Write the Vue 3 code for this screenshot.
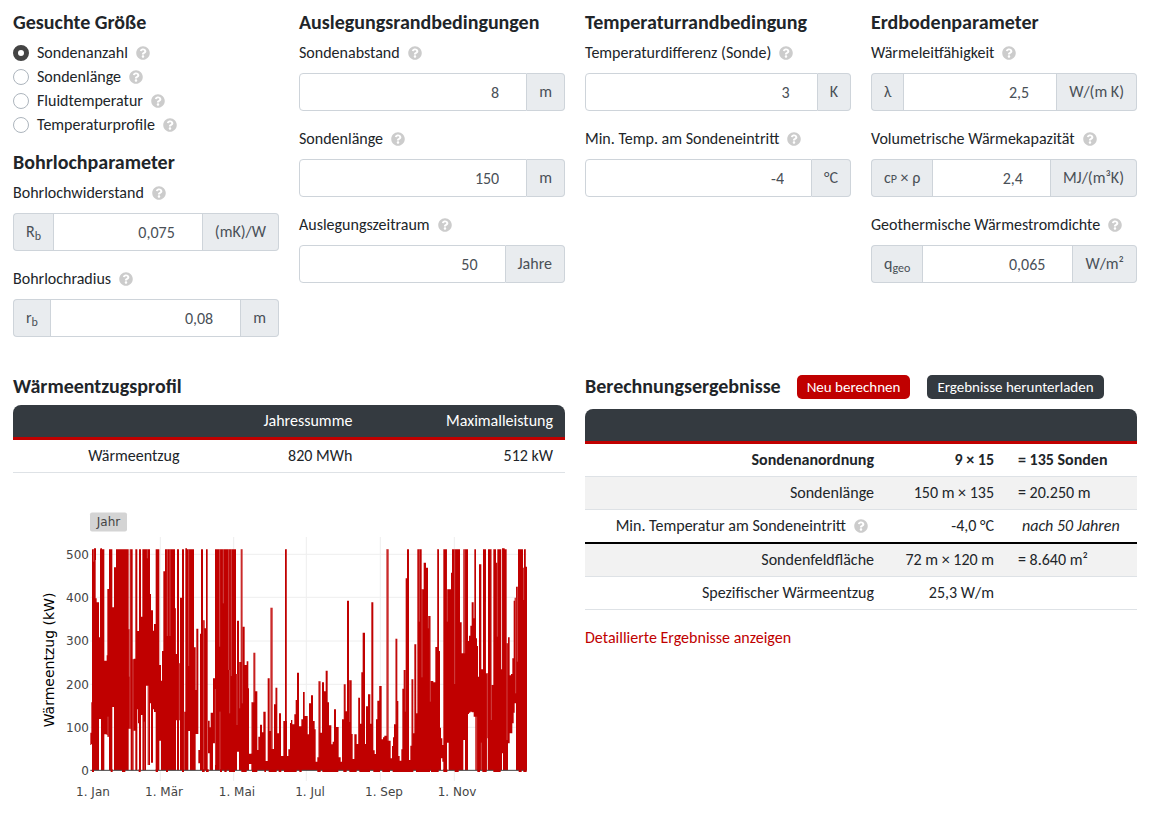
<template>
  <main class="page">
    <div class="params">
      <section>
        <h2>Gesuchte Größe</h2>
        <div v-for="m in modes" :key="m" class="radio">
          <label>
            <input v-model="mode" type="radio" name="mode" :value="m" />
            <span>{{ m }}</span>
          </label>
          <svg class="help" viewBox="0 0 512 512"><path :d="helpPath" /></svg>
        </div>
        <h2 class="sub">Bohrlochparameter</h2>
        <div v-for="f in borehole" :key="f.id" class="field">
          <label :for="f.id">{{ f.label }}</label>
          <svg class="help" viewBox="0 0 512 512"><path :d="helpPath" /></svg>
          <div class="group">
            <span v-if="f.symbol" class="addon left"><span v-html="f.symbol"></span></span>
            <input :id="f.id" v-model="f.value" type="text" inputmode="decimal" />
            <span class="addon right">{{ f.unit }}</span>
          </div>
        </div>
      </section>

      <section v-for="s in sections" :key="s.title">
        <h2>{{ s.title }}</h2>
        <div v-for="f in s.fields" :key="f.id" class="field">
          <label :for="f.id">{{ f.label }}</label>
          <svg class="help" viewBox="0 0 512 512"><path :d="helpPath" /></svg>
          <div class="group">
            <span v-if="f.symbol" class="addon left"><span v-html="f.symbol"></span></span>
            <input :id="f.id" v-model="f.value" type="text" inputmode="decimal" />
            <span class="addon right">{{ f.unit }}</span>
          </div>
        </div>
      </section>
    </div>

    <div class="output">
      <section>
        <h2>Wärmeentzugsprofil</h2>
        <table class="profile">
          <thead>
            <tr><th></th><th>Jahressumme</th><th>Maximalleistung</th></tr>
          </thead>
          <tbody>
            <tr><td>Wärmeentzug</td><td>820 MWh</td><td>512 kW</td></tr>
          </tbody>
        </table>

        <svg class="chart" viewBox="0 0 552 310">
          <rect x="77" y="12.5" width="37" height="19" rx="2" fill="#d4d4d4" />
          <text x="95.5" y="26" class="tick" text-anchor="middle">Jahr</text>

          <!-- plot area, three units per pixel -->
          <g transform="translate(67 40) scale(0.33333)">
            <path class="grid" :d="gridPath" />
            <path class="series" :d="seriesPath" />
            <path class="gaps" :d="gapPath" />
            <path class="zero" d="M31 691H1340" />
            <path class="series" :d="basePath" />
          </g>

          <text v-for="t in yTicks" :key="t.v" x="76" :y="t.y" class="tick" text-anchor="end">{{ t.v }}</text>
          <text v-for="t in xTicks" :key="t.v" :x="t.x" y="296" class="tick" text-anchor="middle">{{ t.v }}</text>
          <text class="axis" transform="translate(41 160) rotate(-90)" text-anchor="middle">Wärmeentzug (kW)</text>
        </svg>
      </section>

      <section>
        <div class="head">
          <h2>Berechnungsergebnisse</h2>
          <button type="button" class="btn red">Neu berechnen</button>
          <button type="button" class="btn dark">Ergebnisse herunterladen</button>
        </div>
        <table class="results">
          <thead>
            <tr><th></th><th></th><th></th></tr>
          </thead>
          <tbody>
            <tr class="strong"><td>Sondenanordnung</td><td>9 × 15</td><td>= 135 Sonden</td></tr>
            <tr><td>Sondenlänge</td><td>150 m × 135</td><td>= 20.250 m</td></tr>
            <tr class="split">
              <td>Min. Temperatur am Sondeneintritt<svg class="help" viewBox="0 0 512 512"><path :d="helpPath" /></svg></td>
              <td>-4,0 °C</td>
              <td><em>nach 50 Jahren</em></td>
            </tr>
            <tr><td>Sondenfeldfläche</td><td>72 m × 120 m</td><td>= 8.640 m²</td></tr>
            <tr><td>Spezifischer Wärmeentzug</td><td>25,3 W/m</td><td></td></tr>
          </tbody>
        </table>
        <a href="#" class="details" @click.prevent>Detaillierte Ergebnisse anzeigen</a>
      </section>
    </div>
  </main>
</template>

<script setup>
import { ref, reactive } from 'vue'

const helpPath = 'M504 256c0 136.997-111.043 248-248 248S8 392.997 8 256C8 119.083 119.043 8 256 8s248 111.083 248 248zM262.655 90c-54.497 0-89.255 22.957-116.549 63.758-3.536 5.286-2.353 12.415 2.715 16.258l34.699 26.31c5.205 3.947 12.621 3.008 16.665-2.122 17.864-22.658 30.113-35.797 57.303-35.797 20.429 0 45.698 13.148 45.698 32.958 0 14.976-12.363 22.667-32.534 33.976C247.128 238.528 216 254.941 216 296v4c0 6.627 5.373 12 12 12h56c6.627 0 12-5.373 12-12v-1.333c0-28.462 83.186-29.647 83.186-106.667 0-58.002-60.165-102-116.531-102zM256 338c-25.365 0-46 20.635-46 46 0 25.364 20.635 46 46 46s46-20.636 46-46c0-25.365-20.635-46-46-46z'

const modes = ['Sondenanzahl', 'Sondenlänge', 'Fluidtemperatur', 'Temperaturprofile']
const mode = ref('Sondenanzahl')

const borehole = reactive([
  { id: 'rb', label: 'Bohrlochwiderstand', symbol: 'R<sub>b</sub>', value: '0,075', unit: '(mK)/W' },
  { id: 'radius', label: 'Bohrlochradius', symbol: 'r<sub>b</sub>', value: '0,08', unit: 'm' }
])

const sections = reactive([
  {
    title: 'Auslegungsrandbedingungen',
    fields: [
      { id: 'abstand', label: 'Sondenabstand', value: '8', unit: 'm' },
      { id: 'laenge', label: 'Sondenlänge', value: '150', unit: 'm' },
      { id: 'zeitraum', label: 'Auslegungszeitraum', value: '50', unit: 'Jahre' }
    ]
  },
  {
    title: 'Temperaturrandbedingung',
    fields: [
      { id: 'dt', label: 'Temperaturdifferenz (Sonde)', value: '3', unit: 'K' },
      { id: 'tmin', label: 'Min. Temp. am Sondeneintritt', value: '-4', unit: '°C' }
    ]
  },
  {
    title: 'Erdbodenparameter',
    fields: [
      { id: 'lambda', label: 'Wärmeleitfähigkeit', symbol: 'λ', value: '2,5', unit: 'W/(m K)' },
      { id: 'cp', label: 'Volumetrische Wärmekapazität', symbol: 'c<small>P</small> × ρ', value: '2,4', unit: 'MJ/(m³K)' },
      { id: 'qgeo', label: 'Geothermische Wärmestromdichte', symbol: 'q<sub>geo</sub>', value: '0,065', unit: 'W/m²' }
    ]
  }
])

const yTicks = [500, 400, 300, 200, 100, 0].map((v, i) => ({ v, y: Math.round(59 + i * 43.2) }))
const xTicks = [
  { v: '1. Jan', x: 80 },
  { v: '1. Mär', x: 151 },
  { v: '1. Mai', x: 224 },
  { v: '1. Jul', x: 297 },
  { v: '1. Sep', x: 371 },
  { v: '1. Nov', x: 444 }
]

const gridPath = [241, 461, 679, 901, 1123].map(x => `M${x} -9V723`).join('') +
  [43, 172, 303, 433, 562].map(y => `M31 ${y}H1340`).join('')

// left, right, top, bottom (bottom defaults to the zero line)
const ZERO = 691
const bars = [
  [31, 34, 578, 615], [34, 37, 487, 612], [36, 47, 28], [42, 48, 25, 60], [47, 50, 175], [50, 57, 187], [57, 60, 292, 537], [60, 63, 28, 537],
  [61, 66, 25, 60], [63, 73, 28], [73, 80, 362, 583], [80, 82, 346, 585], [82, 87, 147, 590], [87, 97, 28], [97, 102, 202, 501],
  [102, 108, 82], [108, 146, 28], [146, 149, 268, 566], [149, 152, 28, 566], [152, 158, 28], [158, 161, 358], [161, 166, 356, 572],
  [166, 172, 28], [172, 174, 273, 508], [174, 177, 273, 550], [177, 183, 28], [183, 187, 230, 525], [187, 198, 28], [198, 203, 28, 437],
  [203, 210, 28, 675], [210, 213, 162, 490], [213, 219, 211, 668], [219, 222, 272, 508], [222, 227, 252, 516], [227, 238, 28],
  [238, 243, 375, 602], [243, 246, 422], [246, 250, 333], [250, 255, 94], [255, 285, 28], [285, 288, 205], [288, 291, 342, 541],
  [291, 297, 28], [297, 300, 370, 541], [300, 306, 173], [306, 312, 28], [312, 316, 515], [316, 325, 28], [316, 321, 25, 60],
  [325, 330, 28, 573], [330, 342, 28], [342, 347, 322], [347, 350, 450, 582], [349, 355, 266, 582], [355, 360, 630, 670],
  [360, 365, 281], [363, 369, 28], [369, 374, 241], [374, 378, 265], [378, 383, 28], [384, 389, 542, 640], [389, 392, 562],
  [392, 399, 518], [399, 405, 415, 610], [405, 468, 28], [468, 471, 402], [471, 477, 242, 635], [477, 482, 366], [482, 488, 28],
  [488, 494, 260], [494, 500, 375], [500, 505, 364], [505, 507, 445], [507, 514, 641, 672], [514, 520, 487], [520, 526, 338],
  [526, 532, 454], [532, 535, 630], [535, 540, 590], [540, 546, 554], [546, 550, 577], [550, 557, 515], [557, 563, 663],
  [563, 569, 415], [569, 571, 573], [571, 578, 203], [578, 582, 627], [582, 586, 493], [586, 592, 443], [592, 597, 580],
  [597, 603, 520], [603, 610, 648], [610, 615, 543], [615, 621, 28], [621, 625, 648], [625, 630, 628], [630, 633, 549],
  [633, 637, 540], [637, 643, 553], [643, 647, 523], [647, 651, 480], [651, 657, 398], [657, 664, 559], [664, 669, 538],
  [669, 674, 456], [674, 683, 528], [683, 687, 583], [687, 693, 490], [693, 699, 466], [699, 704, 543], [704, 707, 568],
  [707, 712, 665], [712, 715, 652], [715, 722, 424], [722, 726, 578], [726, 732, 427], [732, 737, 454], [737, 743, 392],
  [743, 747, 487], [747, 754, 556], [754, 758, 613], [758, 762, 605], [762, 768, 508], [768, 776, 561], [776, 782, 652],
  [782, 786, 665], [786, 791, 538], [791, 797, 433], [797, 801, 514], [801, 807, 182], [807, 815, 421], [815, 818, 582],
  [818, 823, 657], [823, 830, 583], [830, 834, 612], [834, 840, 473], [840, 844, 551], [844, 848, 397], [848, 855, 278],
  [855, 858, 612], [858, 864, 499], [864, 871, 463], [871, 874, 551], [874, 880, 187], [880, 884, 631], [884, 888, 642],
  [888, 892, 538], [892, 897, 482], [897, 905, 438], [905, 909, 598], [909, 913, 592], [913, 919, 587], [919, 926, 28],
  [926, 932, 602], [932, 936, 655], [936, 939, 618], [939, 942, 592], [942, 946, 553], [946, 952, 296], [952, 955, 483],
  [955, 959, 648], [959, 964, 662], [964, 967, 628], [967, 971, 446], [971, 977, 390], [977, 981, 115], [981, 987, 28],
  [987, 991, 660], [991, 994, 617], [994, 1000, 418], [1000, 1003, 580], [1003, 1009, 313], [1009, 1012, 520], [1012, 1025, 28], [1025, 1031, 148],
  [1031, 1038, 68], [1038, 1044, 83], [1044, 1052, 228], [1052, 1060, 423], [1060, 1066, 427], [1066, 1071, 321], [1071, 1077, 28],
  [1077, 1080, 333], [1080, 1083, 563], [1083, 1087, 595, 655], [1087, 1090, 615, 665], [1090, 1101, 28], [1101, 1106, 148, 608],
  [1106, 1113, 148], [1113, 1116, 98], [1116, 1140, 28], [1140, 1145, 247], [1145, 1150, 340], [1150, 1155, 28, 600],
  [1155, 1164, 28], [1164, 1167, 303, 522], [1167, 1171, 287, 518], [1171, 1175, 257, 515], [1175, 1181, 187, 517],
  [1181, 1183, 235, 530], [1183, 1188, 28, 530], [1186, 1191, 295], [1191, 1194, 318], [1194, 1198, 410], [1197, 1204, 73],
  [1204, 1209, 388], [1209, 1218, 28], [1218, 1222, 400], [1222, 1226, 400, 595], [1224, 1235, 28], [1235, 1240, 435],
  [1240, 1248, 28], [1248, 1252, 68], [1252, 1264, 28], [1264, 1266, 388], [1266, 1269, 28, 640], [1269, 1280, 28],
  [1266, 1274, 25, 60], [1280, 1284, 310], [1284, 1289, 292, 610], [1289, 1293, 406, 580], [1293, 1297, 402, 580],
  [1297, 1301, 355, 550], [1301, 1304, 182, 518], [1304, 1308, 173, 490], [1308, 1314, 140], [1314, 1329, 28],
  [1329, 1332, 83], [1332, 1338, 28], [1338, 1341, 80]
]
const seriesPath = bars.map(([l, r, t, b = ZERO]) => `M${l} ${t}H${r}V${b}H${l}Z`).join('')

// thin light slits between neighbouring peaks: x, top, bottom
const gaps = [
  [41, 28, 65], [84, 530, 588], [148, 268, 410], [150, 28, 566], [159, 358, 690], [186, 525, 690], [193, 545, 690], [202, 28, 55],
  [205, 437, 675], [262, 28, 288], [270, 28, 288], [288, 205, 342], [298, 370, 541], [313, 515, 690], [326, 28, 378],
  [371, 241, 690], [406, 447, 675], [419, 28, 320], [420, 515, 690], [430, 28, 190], [446, 28, 390], [449, 390, 520], [454, 28, 408],
  [471, 402, 555], [479, 366, 505], [483, 28, 366], [487, 28, 490], [515, 487, 640], [522, 338, 487],
  [572, 203, 573], [576, 203, 627], [587, 443, 493], [620, 28, 543], [716, 424, 652], [721, 424, 578], [791, 433, 538], [809, 421, 546],
  [835, 473, 612], [898, 438, 482], [920, 28, 587], [924, 28, 602], [947, 296, 553], [976, 390, 515], [995, 418, 617],
  [1010, 313, 520], [1018, 28, 245], [1026, 148, 412], [1045, 228, 265], [1051, 228, 485], [1072, 28, 321], [1102, 28, 245], [1124, 28, 432],
  [1154, 28, 340], [1190, 530, 690], [1204, 608, 690], [1219, 185, 400], [1222, 400, 690], [1234, 28, 540], [1252, 68, 290],
  [1265, 28, 388], [1281, 310, 600], [1307, 173, 460], [1312, 140, 365], [1331, 83, 180], [1337, 28, 80]
]
const gapPath = gaps.map(([x, t, b]) => `M${x} ${t}V${b}`).join('')

// low points that reach just under the axis
const basePath = [
  [36, 42], [92, 98], [126, 136], [176, 182], [227, 234], [258, 264], [306, 312], [366, 374], [378, 386], [420, 426], [433, 440],
  [447, 465], [484, 500], [516, 532], [553, 558], [566, 590], [596, 604], [612, 650], [658, 665], [712, 722], [727, 775],
  [790, 800], [808, 830], [838, 870], [880, 900], [907, 930], [938, 1000], [1008, 1050], [1053, 1076], [1090, 1102],
  [1124, 1136], [1192, 1200], [1207, 1220], [1240, 1262], [1316, 1325], [1330, 1340]
].map(([l, r]) => `M${l} 688H${r}V696H${l}Z`).join('')
</script>

<style>
body { margin: 0; background: #fff; }
</style>

<style scoped>
.page {
  padding: 10px 19px 8px 13px;
  color: #212529;
  font-family: Calibri, Carlito, "Open Sans", sans-serif;
  font-size: 16px;
  line-height: 24px;
}
.params {
  display: grid;
  grid-template-columns: repeat(4, minmax(0, 1fr));
  gap: 20px;
}
.output {
  display: grid;
  grid-template-columns: repeat(2, minmax(0, 1fr));
  gap: 20px;
  margin-top: 21px;
}
h2 { margin: 0 0 7px; font-size: 20px; line-height: 24px; font-weight: 700; }
h2.sub { margin-top: 13px; }

.help { width: 14px; height: 14px; margin-left: 8px; vertical-align: -2px; fill: #ccc; }

.radio { display: flex; align-items: center; height: 24px; }
.radio label { display: flex; align-items: center; gap: 8px; }
.radio input {
  appearance: none;
  width: 16px; height: 16px;
  margin: 0;
  border: 1px solid #adb5bd; border-radius: 50%;
  background: #fff;
}
.radio input:checked { border: 5px solid #444; }

.field { margin-bottom: 16px; }
.group { display: flex; height: 38px; margin-top: 8px; }
.group input {
  flex: 1; min-width: 0;
  box-sizing: border-box;
  padding: 2px 27px 0 12px;
  border: 1px solid #ced4da; border-radius: 4px 0 0 4px;
  background: #fff; color: #495057;
  font: inherit; text-align: right;
}
.addon + input { border-radius: 0; }
.addon {
  display: flex; align-items: center;
  box-sizing: border-box;
  padding: 0 12px;
  border: 1px solid #ced4da;
  background: #e9ecef; color: #495057;
  white-space: nowrap;
}
.addon.left { border-right: 0; border-radius: 4px 0 0 4px; }
.addon.right { border-left: 0; border-radius: 0 4px 4px 0; }
.addon :deep(sub) { position: relative; bottom: -3px; font-size: 12px; line-height: 0; vertical-align: baseline; }
.addon :deep(small) { font-size: 12px; }

table { width: 100%; border-collapse: separate; border-spacing: 0; table-layout: fixed; }
th {
  height: 32px;
  padding: 0 12px;
  border-bottom: 3px solid #c00000;
  background: #343a40; color: #fff;
  font-weight: 400; text-align: right;
}
th:first-child { border-top-left-radius: 8px; }
th:last-child { border-top-right-radius: 8px; }
td { height: 32px; padding: 0 12px; border-bottom: 1px solid #dee2e6; text-align: right; }
.profile th:nth-child(1) { width: 28%; }
.profile th:nth-child(3) { width: 32%; }
.results th:nth-child(2) { width: 96px; }
.results th:nth-child(3) { width: 107px; }
.results td:nth-child(3) { text-align: left; white-space: nowrap; }
.results tbody tr:nth-child(even) td { background: #f2f2f2; }
.results .split td { border-bottom: 2px solid #000; }
.results .help { margin-right: 6px; }
.results em { padding-left: 4px; }
.strong { font-weight: 700; }

.head { display: flex; align-items: flex-start; margin-bottom: 10px; }
.head h2 { margin: 0 16px 0 0; }
.btn {
  height: 24px;
  margin: 1px 0 0;
  padding: 0 10px;
  border: 0; border-radius: 5px;
  color: #fff;
  font: inherit; font-size: 15px; line-height: 24px;
}
.btn.red { margin-right: 17px; background: #c00000; }
.btn.dark { background: #343a40; }
.details { display: inline-block; margin-top: 16px; color: #c00000; text-decoration: none; }

.chart { display: block; width: 100%; margin-top: 27px; }
.tick { fill: #444; font: 12px "DejaVu Sans", sans-serif; }
.axis { fill: #000; font: 14px "DejaVu Sans", sans-serif; }
.grid { fill: none; stroke: #eee; stroke-width: 3; }
.series { fill: #c00000; }
.gaps { fill: none; stroke: #fff; stroke-opacity: .4; stroke-width: 2; }
.zero { stroke: #444; stroke-width: 3; }
</style>
